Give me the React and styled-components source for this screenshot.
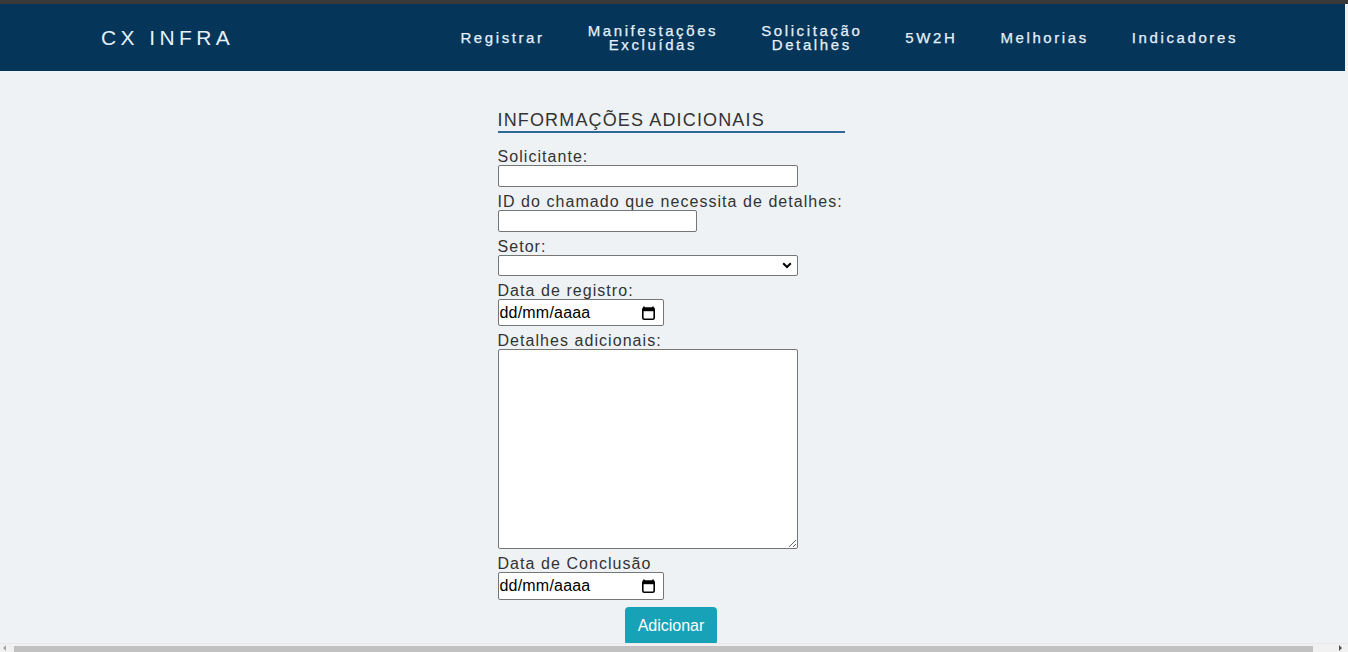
import React from 'react';
import styled, { createGlobalStyle } from 'styled-components';

const COLORS = {
  page: '#eef2f5',
  header: '#06355a',
  strip: '#3a3a3a',
  headerText: '#e4f1fa',
  text: '#333333',
  accent: '#2e6a96',
  border: '#767676',
  teal: '#17a2b8',
};

const GlobalStyle = createGlobalStyle`
  html, body {
    margin: 0;
    padding: 0;
    background: ${COLORS.page};
    font-family: "Liberation Sans", Arial, sans-serif;
    overflow: hidden;
  }
`;

const TopStrip = styled.div`
  height: 4px;
  background: ${COLORS.strip};
`;

const Header = styled.header`
  display: flex;
  align-items: center;
  height: 67px;
  margin-right: 3px;
  padding: 0 107px 0 101px;
  background: ${COLORS.header};
  color: ${COLORS.headerText};
`;

const Logo = styled.div`
  font-size: 21px;
  letter-spacing: 4.4px;
  white-space: nowrap;
`;

const Nav = styled.nav`
  display: flex;
  align-items: center;
  gap: 43px;
  margin-left: auto;
`;

const NavItem = styled.a`
  font-size: 15px;
  font-weight: 400;
  line-height: 14px;
  letter-spacing: 2.6px;
  text-align: center;
  color: inherit;
  text-decoration: none;
  white-space: nowrap;
  -webkit-text-stroke: 0.25px currentColor;
`;

const Main = styled.main`
  display: flex;
  justify-content: center;
  padding: 39px 6px 0 0;
`;

const Form = styled.form`
  display: flex;
  flex-direction: column;
  width: 347px;
`;

const Title = styled.h2`
  margin: 0 0 13px;
  padding-bottom: 0;
  border-bottom: 2px solid ${COLORS.accent};
  font-size: 18px;
  font-weight: 400;
  line-height: 21px;
  letter-spacing: 1.15px;
  color: ${COLORS.text};
`;

const Label = styled.label`
  display: block;
  margin: 6px 0 -1px;
  font-size: 16px;
  line-height: 18px;
  letter-spacing: 1.05px;
  white-space: nowrap;
  color: ${COLORS.text};

  &:first-of-type {
    margin-top: 2px;
  }
`;

const Field = styled.input`
  box-sizing: border-box;
  width: ${(p) => p.$width}px;
  height: 22px;
  margin: 0;
  padding: 1px 2px;
  border: 1px solid ${COLORS.border};
  border-radius: 2px;
  background: #fff;
  font: 13px "Liberation Sans", Arial, sans-serif;
`;

const SelectWrap = styled.div`
  position: relative;
  width: 300px;
  height: 21px;
`;

const Select = styled.select`
  box-sizing: border-box;
  width: 100%;
  height: 100%;
  margin: 0;
  border: 1px solid ${COLORS.border};
  border-radius: 2px;
  background: #fff;
  appearance: none;
  font: 13px "Liberation Sans", Arial, sans-serif;
`;

const Chevron = styled.svg`
  position: absolute;
  top: 7px;
  right: 6px;
  pointer-events: none;
`;

const DateBox = styled.div`
  box-sizing: border-box;
  display: flex;
  align-items: center;
  width: 166px;
  height: ${(p) => p.$height}px;
  padding: 0 7px 0 1px;
  border: 1px solid ${COLORS.border};
  border-radius: 2px;
  background: #fff;
`;

const DateText = styled.input`
  flex: 1;
  min-width: 0;
  padding: 0;
  border: none;
  outline: none;
  background: transparent;
  font: 16px "Liberation Sans", Arial, sans-serif;
  letter-spacing: 0.2px;
  color: #000;

  &::placeholder {
    color: #000;
    opacity: 1;
  }
`;

const TextArea = styled.textarea`
  box-sizing: border-box;
  width: 300px;
  height: 200px;
  margin: 0;
  border: 1px solid ${COLORS.border};
  border-radius: 2px;
  background: #fff;
  font: 13px "Liberation Mono", monospace;
  resize: both;
`;

const Button = styled.button`
  align-self: center;
  margin-top: 7px;
  padding: 8px 13px;
  border: none;
  border-radius: 4px;
  background: ${COLORS.teal};
  color: #fff;
  font: 16px/22px "Liberation Sans", Arial, sans-serif;
  cursor: pointer;
`;

const ScrollTrack = styled.div`
  position: fixed;
  left: 0;
  right: 0;
  bottom: 0;
  height: 8px;
  background: #f1f1f1;
  border-top: 1px solid #e8e8e8;
`;

const ScrollThumb = styled.div`
  position: absolute;
  left: 14px;
  right: 35px;
  top: 2px;
  bottom: 0;
  background: #c1c1c1;
`;

const Arrow = styled.span`
  position: absolute;
  bottom: 1px;
  ${(p) => (p.$side === 'left' ? 'left: 3px;' : 'right: 6px;')}
  width: 0;
  height: 0;
  border-top: 3px solid transparent;
  border-bottom: 3px solid transparent;
  ${(p) =>
    p.$side === 'left'
      ? 'border-right: 3px solid #a3a3a3;'
      : 'border-left: 3px solid #505050;'}
`;

const CalendarIcon = () => (
  <svg width="15" height="16" viewBox="0 0 15 16" aria-hidden="true">
    <path d="M3 1.5v2M12 1.5v2" stroke="#000" strokeWidth="1.6" />
    <rect x="1.8" y="3" width="11.4" height="11.2" rx="1.4" fill="none" stroke="#000" strokeWidth="1.6" />
    <rect x="1.8" y="3" width="11.4" height="3.2" fill="#000" />
  </svg>
);

const DateField = ({ id, height }) => (
  <DateBox $height={height}>
    <DateText id={id} type="text" placeholder="dd/mm/aaaa" />
    <CalendarIcon />
  </DateBox>
);

const NAV = [
  ['Registrar'],
  ['Manifestações', 'Excluídas'],
  ['Solicitação', 'Detalhes'],
  ['5W2H'],
  ['Melhorias'],
  ['Indicadores'],
];

const App = () => (
  <>
    <GlobalStyle />
    <TopStrip />
    <Header>
      <Logo>CX INFRA</Logo>
      <Nav>
        {NAV.map((lines) => (
          <NavItem key={lines[0]} href="#">
            {lines.map((line, i) => (
              <React.Fragment key={line}>
                {i > 0 && <br />}
                {line}
              </React.Fragment>
            ))}
          </NavItem>
        ))}
      </Nav>
    </Header>
    <Main>
      <Form onSubmit={(e) => e.preventDefault()}>
        <Title>INFORMAÇÕES ADICIONAIS</Title>

        <Label htmlFor="solicitante">Solicitante:</Label>
        <Field id="solicitante" type="text" $width={300} />

        <Label htmlFor="chamado">ID do chamado que necessita de detalhes:</Label>
        <Field id="chamado" type="text" $width={199} />

        <Label htmlFor="setor">Setor:</Label>
        <SelectWrap>
          <Select id="setor" defaultValue="">
            <option value="" />
          </Select>
          <Chevron width="10" height="7" viewBox="0 0 10 7">
            <path d="M1.2 1.2 5 5l3.8-3.8" fill="none" stroke="#000" strokeWidth="2" />
          </Chevron>
        </SelectWrap>

        <Label htmlFor="registro">Data de registro:</Label>
        <DateField id="registro" height={27} />

        <Label htmlFor="detalhes">Detalhes adicionais:</Label>
        <TextArea id="detalhes" />

        <Label htmlFor="conclusao">Data de Conclusão</Label>
        <DateField id="conclusao" height={28} />

        <Button type="submit">Adicionar</Button>
      </Form>
    </Main>
    <ScrollTrack>
      <Arrow $side="left" />
      <ScrollThumb />
      <Arrow $side="right" />
    </ScrollTrack>
  </>
);

export default App;
